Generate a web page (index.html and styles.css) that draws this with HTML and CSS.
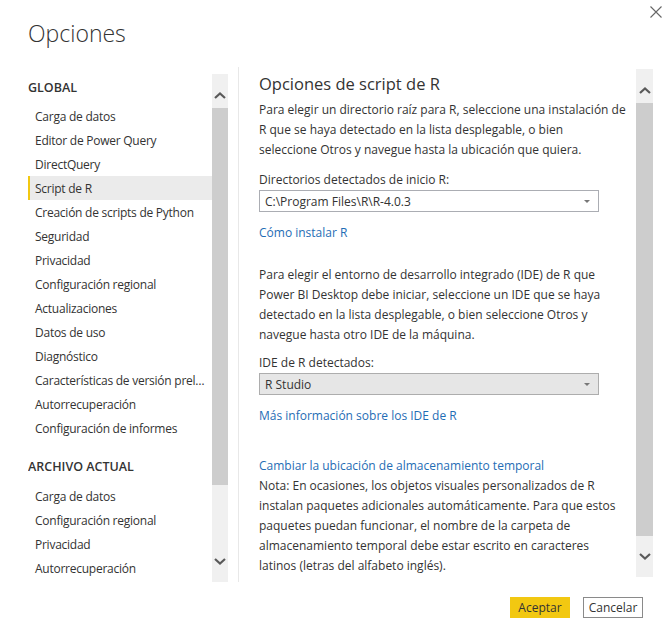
FILE: index.html
```html
<!DOCTYPE html>
<html lang="es">
<head>
<meta charset="utf-8">
<title>Opciones</title>
<link rel="stylesheet" href="styles.css">
</head>
<body>
<div class="dialog">
  <header class="top">
    <h1 class="title">Opciones</h1>
    <button class="close" aria-label="Cerrar">
      <svg width="12" height="12" viewBox="0 0 12 12"><path d="M0.5 0.5 L11.5 11.5 M11.5 0.5 L0.5 11.5" stroke="#666" stroke-width="1.1" fill="none"/></svg>
    </button>
  </header>
  <div class="main">
    <nav class="sidebar">
      <div class="navlist">
        <div class="section-title">GLOBAL</div>
        <ul class="items">
          <li>Carga de datos</li>
          <li>Editor de Power Query</li>
          <li>DirectQuery</li>
          <li class="active">Script de R</li>
          <li>Creación de scripts de Python</li>
          <li>Seguridad</li>
          <li>Privacidad</li>
          <li>Configuración regional</li>
          <li>Actualizaciones</li>
          <li>Datos de uso</li>
          <li>Diagnóstico</li>
          <li>Características de versión preliminar</li>
          <li>Autorrecuperación</li>
          <li>Configuración de informes</li>
        </ul>
        <div class="section-title second">ARCHIVO ACTUAL</div>
        <ul class="items">
          <li>Carga de datos</li>
          <li>Configuración regional</li>
          <li>Privacidad</li>
          <li>Autorrecuperación</li>
        </ul>
      </div>
      <div class="scrollbar left-sb">
        <div class="sb-up"><svg width="12" height="7" viewBox="0 0 12 7"><path d="M1 6 L6 1.5 L11 6" stroke="#5a5a5a" stroke-width="2.2" fill="none"/></svg></div>
        <div class="sb-track"><div class="sb-thumb"></div></div>
        <div class="sb-down"><svg width="12" height="7" viewBox="0 0 12 7"><path d="M1 1 L6 5.5 L11 1" stroke="#5a5a5a" stroke-width="2.2" fill="none"/></svg></div>
      </div>
    </nav>
    <div class="divider"></div>
    <section class="content">
      <div class="pane">
        <h2 class="heading">Opciones de script de R</h2>
        <p class="text">Para elegir un directorio raíz para R, seleccione una instalación de<br>R que se haya detectado en la lista desplegable, o bien<br>seleccione Otros y navegue hasta la ubicación que quiera.</p>
        <label class="label">Directorios detectados de inicio R:</label>
        <div class="select"><span>C:\Program Files\R\R-4.0.3</span><span class="caret"></span></div>
        <a class="link">Cómo instalar R</a>
        <p class="text para2">Para elegir el entorno de desarrollo integrado (IDE) de R que<br>Power BI Desktop debe iniciar, seleccione un IDE que se haya<br>detectado en la lista desplegable, o bien seleccione Otros y<br>navegue hasta otro IDE de la máquina.</p>
        <label class="label label2">IDE de R detectados:</label>
        <div class="select gray"><span>R Studio</span><span class="caret"></span></div>
        <a class="link">Más información sobre los IDE de R</a>
        <a class="link temp">Cambiar la ubicación de almacenamiento temporal</a>
        <p class="text">Nota: En ocasiones, los objetos visuales personalizados de R<br>instalan paquetes adicionales automáticamente. Para que estos<br>paquetes puedan funcionar, el nombre de la carpeta de<br>almacenamiento temporal debe estar escrito en caracteres<br>latinos (letras del alfabeto inglés).</p>
      </div>
      <div class="scrollbar right-sb">
        <div class="sb-up"><svg width="12" height="7" viewBox="0 0 12 7"><path d="M1 6 L6 1.5 L11 6" stroke="#5a5a5a" stroke-width="2.2" fill="none"/></svg></div>
        <div class="sb-track"><div class="sb-thumb"></div></div>
        <div class="sb-down"><svg width="12" height="7" viewBox="0 0 12 7"><path d="M1 1 L6 5.5 L11 1" stroke="#5a5a5a" stroke-width="2.2" fill="none"/></svg></div>
      </div>
    </section>
  </div>
  <footer class="actions">
    <button class="btn primary">Aceptar</button>
    <button class="btn secondary">Cancelar</button>
  </footer>
</div>
</body>
</html>
```
FILE: styles.css
```css
* { box-sizing: border-box; }
html, body { margin: 0; padding: 0; background: #fff; }
body {
  font-family: "Open Sans", "Noto Sans", "DejaVu Sans", sans-serif;
  font-size: 12px;
  color: #333;
  width: 670px;
  height: 643px;
  overflow: hidden;
}
.dialog { display: flex; flex-direction: column; height: 643px; }

.top { display: flex; justify-content: space-between; align-items: flex-start; padding-left: 28px; height: 67px; }
.title { margin: 18px 0 0; font-weight: 300; font-size: 23px; line-height: 30px; color: #333; letter-spacing: 0; }
.close { margin: 6px 8px 0 0; padding: 0; border: 0; background: none; width: 12px; height: 12px; display: flex; }

.main { display: flex; height: 515px; }
.sidebar { display: flex; margin: 7px 0 0 28px; height: 508px; }
.navlist { width: 184px; overflow: hidden; padding-top: 4px; }
.section-title { font-weight: 600; font-size: 12.5px; line-height: 20px; color: #333; margin-bottom: 6px; }
.section-title.second { margin-top: 17px; margin-bottom: 7px; }
.items { list-style: none; margin: 0; padding: 0; }
.items li { height: 24px; line-height: 25px; padding: 0 6px 0 7px; white-space: nowrap; overflow: hidden; text-overflow: ellipsis; letter-spacing: -0.25px; }
.items li.active { background: #ebebeb; border-left: 2px solid #f2c811; padding-left: 5px; }

.scrollbar { width: 16px; background: #f0f0f0; display: flex; flex-direction: column; }
.sb-up { height: 34px; display: flex; justify-content: center; align-items: flex-start; padding-top: 18px; }
.sb-down { height: 34px; display: flex; justify-content: center; align-items: flex-start; padding-top: 10px; }
.sb-track { flex: 1; }
.sb-thumb { background: #cdcdcd; }
.left-sb .sb-thumb { height: 377px; }
.right-sb { width: 17px; }
.right-sb .sb-thumb { height: 433px; }

.divider { width: 1px; background: #e8e8e8; margin-left: 10px; height: 515px; }

.content { display: flex; margin-top: 2px; height: 508px; }
.pane { width: 397px; padding: 3px 0 0 20px; overflow: hidden; }
.heading { margin: 0 0 4px; font-weight: 400; font-size: 16.5px; line-height: 24px; color: #333; }
.text { margin: 0; line-height: 20px; white-space: nowrap; }
.label { display: block; margin-top: 10px; line-height: 20px; }
.label.label2 { margin-top: 8px; }
.select { width: 340px; height: 22px; border: 1px solid #abadb3; background: #fff; display: flex; justify-content: space-between; align-items: center; padding: 0 8px 0 5px; }
.select.gray { background: #e6e6e6; border-color: #adadad; }
.caret { width: 0; height: 0; border-left: 3px solid transparent; border-right: 3px solid transparent; border-top: 3px solid #777; }
.link { display: block; color: #1f6db5; line-height: 20px; margin-top: 11px; text-decoration: none; }
.para2 { margin-top: 22px; }
.link.temp { margin-top: 30px; }

.actions { display: flex; justify-content: flex-end; gap: 13px; padding: 15px 27px 0 0; }
.btn { font-family: inherit; font-size: 12px; color: #333; height: 21px; width: 60px; padding: 0; border: 1px solid #8a8a8a; background: #fff; }
.btn.primary { background: #f2c811; border-color: #f2c811; }
```
